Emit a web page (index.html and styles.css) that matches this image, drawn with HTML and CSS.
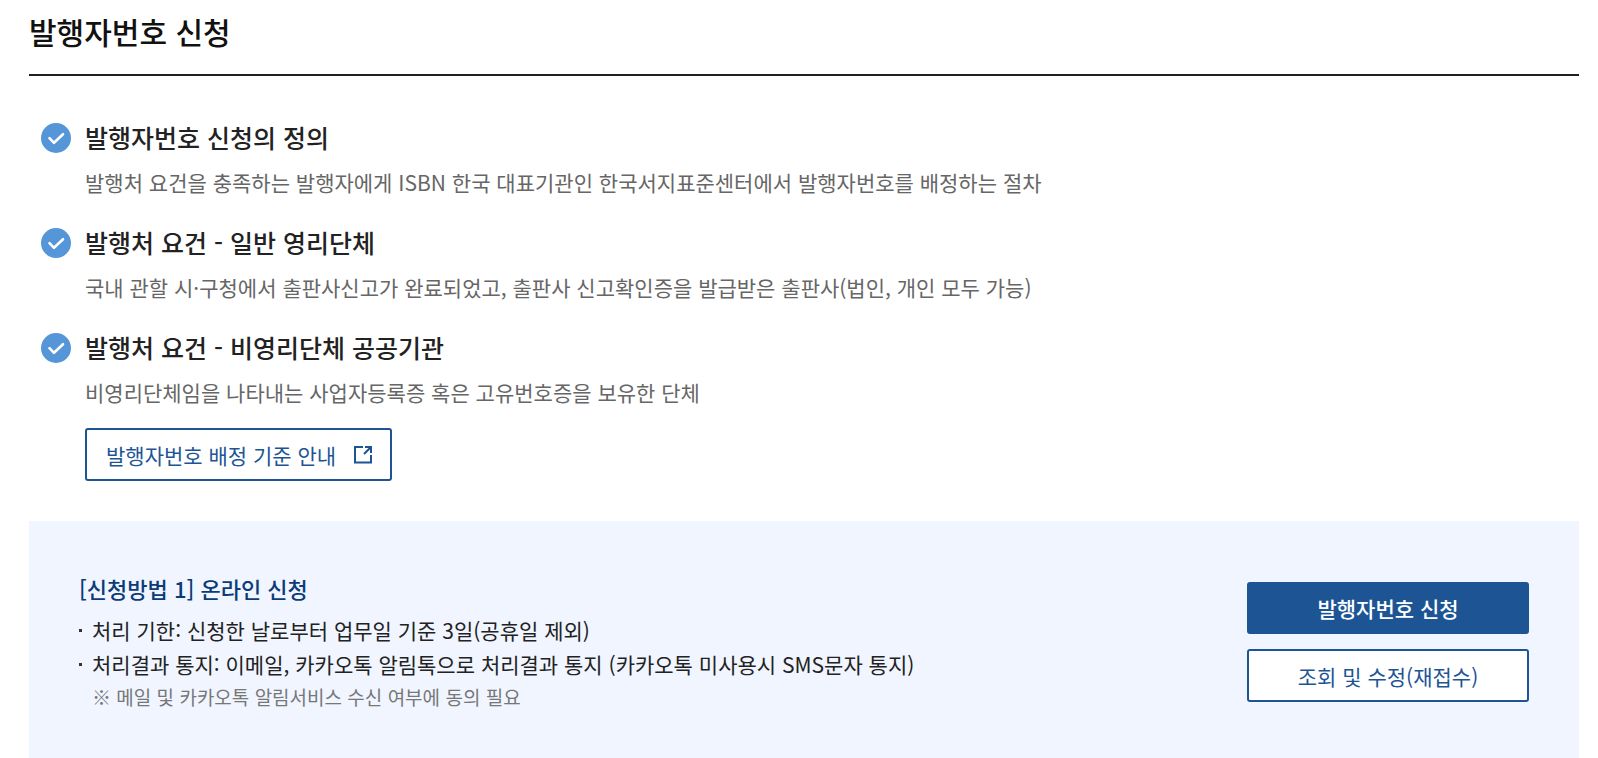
FILE: index.html
```
<!DOCTYPE html>
<html lang="ko">

<head>
    <meta charset="UTF-8">
    <meta name="viewport" content="width=device-width, initial-scale=1.0">
    <title>발행자번호 신청</title>
    <link rel="stylesheet" href="styles.css">
</head>

<body>
    <main class="content">
        <h1 class="page-title">발행자번호 신청</h1>

        <ul class="info-list">
            <li>
                <svg class="check-icon" viewBox="0 0 30 30" aria-hidden="true">
                    <circle cx="15" cy="15" r="15" />
                    <path d="M8.5 15.2l4.5 4.6 9-8.6" />
                </svg>
                <div class="info-text">
                    <h2>발행자번호 신청의 정의</h2>
                    <p>발행처 요건을 충족하는 발행자에게 ISBN 한국 대표기관인 한국서지표준센터에서 발행자번호를 배정하는 절차</p>
                </div>
            </li>
            <li>
                <svg class="check-icon" viewBox="0 0 30 30" aria-hidden="true">
                    <circle cx="15" cy="15" r="15" />
                    <path d="M8.5 15.2l4.5 4.6 9-8.6" />
                </svg>
                <div class="info-text">
                    <h2>발행처 요건 - 일반 영리단체</h2>
                    <p>국내 관할 시·구청에서 출판사신고가 완료되었고, 출판사 신고확인증을 발급받은 출판사(법인, 개인 모두 가능)</p>
                </div>
            </li>
            <li>
                <svg class="check-icon" viewBox="0 0 30 30" aria-hidden="true">
                    <circle cx="15" cy="15" r="15" />
                    <path d="M8.5 15.2l4.5 4.6 9-8.6" />
                </svg>
                <div class="info-text">
                    <h2>발행처 요건 - 비영리단체 공공기관</h2>
                    <p>비영리단체임을 나타내는 사업자등록증 혹은 고유번호증을 보유한 단체</p>
                    <a class="btn btn-link" href="#">
                        발행자번호 배정 기준 안내
                        <svg class="link-icon" viewBox="0 0 18 18" aria-hidden="true">
                            <path d="M9 1H1v15.5h16V9" />
                            <path d="M11 1h6v6M17 1l-7 7" />
                        </svg>
                    </a>
                </div>
            </li>
        </ul>

        <section class="apply-box">
            <div class="apply-text">
                <h3>[신청방법 1] 온라인 신청</h3>
                <ul>
                    <li>처리 기한: 신청한 날로부터 업무일 기준 3일(공휴일 제외)</li>
                    <li>처리결과 통지: 이메일, 카카오톡 알림톡으로 처리결과 통지 (카카오톡 미사용시 SMS문자 통지)</li>
                </ul>
                <p class="note">※ 메일 및 카카오톡 알림서비스 수신 여부에 동의 필요</p>
            </div>
            <div class="apply-buttons">
                <button type="button" class="btn btn-primary">발행자번호 신청</button>
                <button type="button" class="btn">조회 및 수정(재접수)</button>
            </div>
        </section>
    </main>
</body>

</html>
```

FILE: styles.css
```
* {
    box-sizing: border-box;
}

body {
    margin: 0;
    font-family: "Noto Sans CJK KR", "Noto Sans", sans-serif;
    font-size: 21px;
    color: #222;
    background-color: #fff;
}

h1, h2, h3, p, ul {
    margin: 0;
    padding: 0;
    font-weight: 400;
}

ul {
    list-style: none;
}

.content {
    padding: 10px 19px 0 29px;
}

.page-title {
    padding-bottom: 22px;
    border-bottom: 2px solid #231f20;
    font-size: 30px;
    font-weight: 500;
    line-height: 42px;
    color: #111;
}

.info-list {
    display: flex;
    flex-direction: column;
    gap: 25px;
    padding: 42px 12px 40px;
}

.info-list li {
    display: flex;
    gap: 14px;
}

.check-icon {
    flex: none;
    width: 30px;
    height: 30px;
    margin-top: 5px;
}

.check-icon circle {
    fill: #5596d8;
}

.check-icon path {
    fill: none;
    stroke: #fff;
    stroke-width: 2.6;
    stroke-linecap: round;
    stroke-linejoin: round;
}

.info-text h2 {
    font-size: 25px;
    font-weight: 500;
    line-height: 38px;
    color: #222;
}

.info-text p {
    margin-top: 10px;
    line-height: 32px;
    color: #666;
}

.btn {
    display: flex;
    align-items: center;
    justify-content: center;
    height: 53px;
    border: 2px solid #1d5594;
    border-radius: 3px;
    font-family: inherit;
    font-size: 21px;
    color: #1d5594;
    background-color: #fff;
    text-decoration: none;
    cursor: pointer;
}

.btn-link {
    width: fit-content;
    gap: 18px;
    margin-top: 20px;
    padding: 0 18px 0 19px;
}

.link-icon {
    width: 18px;
    height: 18px;
    fill: none;
    stroke: #1d5594;
    stroke-width: 2;
}

.btn-primary {
    height: 52px;
    font-weight: 500;
    color: #fff;
    background-color: #1d5594;
}

.apply-box {
    display: flex;
    align-items: flex-start;
    justify-content: space-between;
    gap: 40px;
    padding: 48px 50px 45px;
    background-color: #f0f5ff;
}

.apply-text h3 {
    margin-bottom: 6px;
    font-size: 22px;
    font-weight: 500;
    line-height: 38px;
    color: #0c3c78;
}

.apply-text li {
    display: flex;
    align-items: center;
    gap: 10px;
    line-height: 34px;
}

.apply-text li::before {
    content: "";
    flex: none;
    width: 3px;
    height: 3px;
    background-color: #333;
}

.apply-text .note {
    padding-left: 13px;
    font-size: 19px;
    line-height: 32px;
    color: #777;
}

.apply-buttons {
    display: flex;
    flex: none;
    flex-direction: column;
    gap: 15px;
    width: 282px;
    padding-top: 13px;
}

@media (max-width: 900px) {
    .apply-box {
        flex-direction: column;
    }
}
```
